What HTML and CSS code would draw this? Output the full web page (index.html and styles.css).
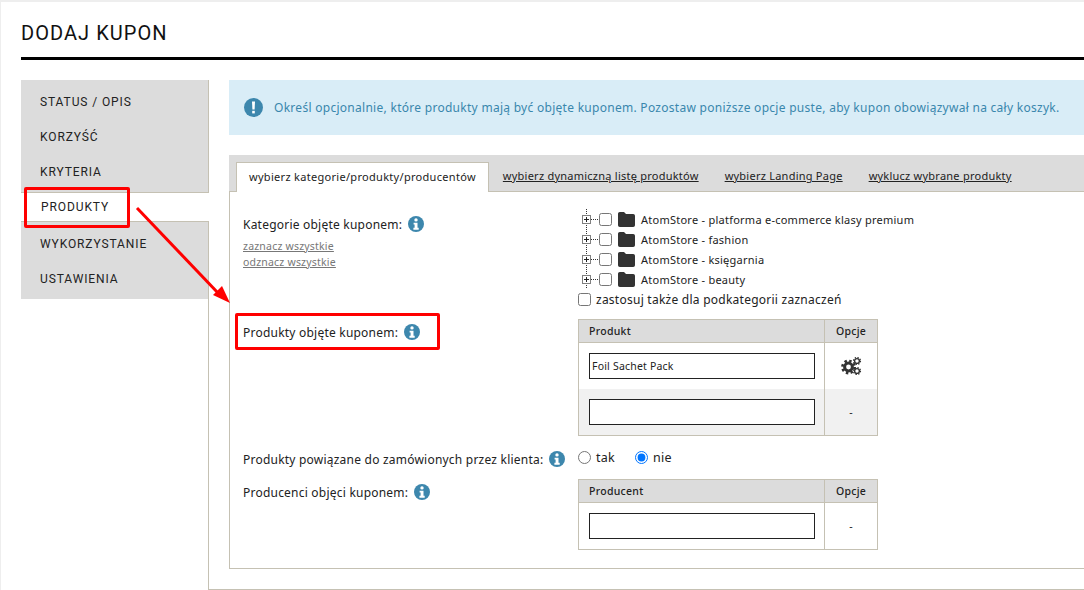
FILE: index.html
```html
<!DOCTYPE html>
<html lang="pl">
<head>
<meta charset="utf-8">
<title>Dodaj kupon</title>
<link rel="stylesheet" href="styles.css">
</head>
<body>
<svg class="defs" width="0" height="0">
  <symbol id="info" viewBox="0 0 16 16">
    <circle cx="8" cy="8" r="8" fill="#3d87ad"/>
    <circle cx="8" cy="3.900" r="1.700" fill="#fff"/>
    <path d="M5.600 6.700h3.900v5h1.200v2H5.400v-2h1.200V8.600H5.600z" fill="#fff"/>
  </symbol>
  <symbol id="toggle" viewBox="0 0 17 20">
    <path d="M4.500 0V20M9 10.500H16" stroke="#333" stroke-dasharray="1 1" fill="none"/>
    <rect x="0.500" y="6.500" width="8" height="8" fill="#fff" stroke="#808080"/>
    <path d="M2 10.500H7M4.500 8V13" stroke="#222" fill="none"/>
  </symbol>
  <symbol id="folder" viewBox="0 0 17 15">
    <path d="M0 2C0 .8.700 0 1.800 0H6L8 2H15.200C16.300 2 17 2.800 17 4V13C17 14.200 16.300 15 15.200 15H1.800C.7 15 0 14.200 0 13z" fill="#333"/>
  </symbol>
</svg>

<div class="page">
  <h1 class="title">DODAJ KUPON</h1>
  <div class="layout">
    <ul class="menu">
      <li>STATUS / OPIS</li>
      <li>KORZYŚĆ</li>
      <li>KRYTERIA</li>
      <li class="active">PRODUKTY</li>
      <li>WYKORZYSTANIE</li>
      <li>USTAWIENIA</li>
    </ul>
    <div class="main">
      <div class="alert">
        <svg class="alert-icon" viewBox="0 0 19 19">
          <circle cx="9.500" cy="9.500" r="9.500" fill="#3d87ad"/>
          <path d="M8 3.500h3l-.4 8H8.400z" fill="#fff"/>
          <rect x="8.200" y="12.800" width="2.600" height="2.600" fill="#fff"/>
        </svg>
        <span>Określ opcjonalnie, które produkty mają być objęte kuponem. Pozostaw poniższe opcje puste, aby kupon obowiązywał na cały koszyk.</span>
      </div>
      <div class="tabs">
        <a class="tab current">wybierz kategorie/produkty/producentów</a>
        <a class="tab">wybierz dynamiczną listę produktów</a>
        <a class="tab">wybierz Landing Page</a>
        <a class="tab">wyklucz wybrane produkty</a>
      </div>
      <div class="panel">
        <div class="row row-tree">
          <div class="label">
            <div class="label-line">Kategorie objęte kuponem: <svg class="info"><use href="#info"/></svg></div>
            <a class="small-link first">zaznacz wszystkie</a>
            <a class="small-link">odznacz wszystkie</a>
          </div>
          <div class="field">
            <ul class="tree">
              <li><svg class="toggle"><use href="#toggle"/></svg><input type="checkbox"><svg class="folder"><use href="#folder"/></svg>AtomStore - platforma e-commerce klasy premium</li>
              <li><svg class="toggle"><use href="#toggle"/></svg><input type="checkbox"><svg class="folder"><use href="#folder"/></svg>AtomStore - fashion</li>
              <li><svg class="toggle"><use href="#toggle"/></svg><input type="checkbox"><svg class="folder"><use href="#folder"/></svg>AtomStore - księgarnia</li>
              <li><svg class="toggle"><use href="#toggle"/></svg><input type="checkbox"><svg class="folder"><use href="#folder"/></svg>AtomStore - beauty</li>
            </ul>
            <label class="apply"><input type="checkbox">zastosuj także dla podkategorii zaznaczeń</label>
          </div>
        </div>

        <div class="row row-products">
          <div class="label"><div class="label-line">Produkty objęte kuponem: <svg class="info"><use href="#info"/></svg></div></div>
          <table class="grid">
            <tr><th class="col-main">Produkt</th><th class="col-opt">Opcje</th></tr>
            <tr>
              <td class="col-main"><input class="text" type="text" value="Foil Sachet Pack"></td>
              <td class="col-opt">
                <svg class="gears" viewBox="0 0 21 18">
                  <circle cx="7.500" cy="10" r="6.100" fill="none" stroke="#333" stroke-width="2.600" stroke-dasharray="2.400 2.390"/>
                  <circle cx="7.500" cy="10" r="3.900" fill="none" stroke="#333" stroke-width="3"/>
                  <circle cx="16" cy="4" r="2.400" fill="none" stroke="#333" stroke-width="1.400"/>
                  <circle cx="16" cy="4" r="3.500" fill="none" stroke="#333" stroke-width="1.200" stroke-dasharray="1.400 1.350"/>
                  <circle cx="16" cy="14" r="2.400" fill="none" stroke="#333" stroke-width="1.400"/>
                  <circle cx="16" cy="14" r="3.500" fill="none" stroke="#333" stroke-width="1.200" stroke-dasharray="1.400 1.350"/>
                </svg>
              </td>
            </tr>
            <tr class="alt">
              <td class="col-main"><input class="text" type="text"></td>
              <td class="col-opt">-</td>
            </tr>
          </table>
        </div>

        <div class="row row-radio">
          <div class="label"><div class="label-line">Produkty powiązane do zamówionych przez klienta: <svg class="info"><use href="#info"/></svg></div></div>
          <div class="radios">
            <label><input type="radio" name="linked">tak</label>
            <label><input type="radio" name="linked" checked>nie</label>
          </div>
        </div>

        <div class="row row-makers">
          <div class="label"><div class="label-line">Producenci objęci kuponem: <svg class="info"><use href="#info"/></svg></div></div>
          <table class="grid">
            <tr><th class="col-main">Producent</th><th class="col-opt">Opcje</th></tr>
            <tr class="last">
              <td class="col-main"><input class="text" type="text"></td>
              <td class="col-opt">-</td>
            </tr>
          </table>
        </div>
      </div>
    </div>
  </div>
</div>

<!-- red annotations drawn over the screenshot -->
<div class="mark mark-menu"></div>
<div class="mark mark-label"></div>
<svg class="arrow" viewBox="0 0 110 120">
  <path d="M2 1L84 87" stroke="#f00" stroke-width="3" fill="none"/>
  <path d="M95 96L78 88L87 79z" fill="#f00"/>
</svg>
</body>
</html>
```

FILE: styles.css
```css
* {
    box-sizing: border-box;
}
html, body {
    margin: 0;
    height: 590px;
    overflow: hidden;
}
body {
    position: relative;
    background: #eee;
    padding: 2px 0 0 1px;
    font-family: "Noto Sans", sans-serif;
    font-size: 12px;
    letter-spacing: 0.28px;
    color: #222;
}
ul {
    list-style: none;
    margin: 0;
    padding: 0;
}
.defs {
    position: absolute;
}
.page {
    background: #fff;
    height: 588px;
    padding: 0 0 0 20px;
}

/* header */
.title {
    margin: 0;
    height: 58px;
    border-bottom: 3px solid #000;
    padding-top: 19px;
    font-family: Roboto, sans-serif;
    font-size: 20px;
    line-height: 24px;
    font-weight: 400;
    letter-spacing: 1.05px;
    color: #111;
}
.layout {
    display: flex;
    height: 530px;
    padding-top: 20px;
    border-bottom: 1px solid #c5c1b3;
    margin-left: 187px;
}

/* left menu */
.menu {
    width: 188px;
    flex: none;
    margin-left: -187px;
    font-family: Roboto, sans-serif;
    letter-spacing: 0.9px;
    font-size: 12px;
}
.menu li {
    height: 35px;
    line-height: 45px;
    padding-left: 19px;
    background: #dcdcdc;
    border-right: 1px solid #c5c1b3;
}
.menu li:nth-child(3) {
    height: 43px;
    border-bottom: 1px solid #c5c1b3;
}
.menu .active {
    height: 28px;
    line-height: 28px;
    padding-left: 20px;
    background: #fff;
    border-right: 0;
    margin-right: 1px;
}
.menu li:nth-child(5) {
    height: 43px;
    border-top: 1px solid #c5c1b3;
    line-height: 45px;
}
.menu li:nth-child(6) {
    line-height: 31px;
}

/* right side */
.main {
    flex: 1;
    margin-left: 20px;
    position: relative;
    min-width: 0;
}
.main::before {
    content: "";
    position: absolute;
    left: -21px;
    top: 141px;
    bottom: 0;
    border-left: 1px solid #c5c1b3;
}
.alert {
    height: 55px;
    background: #d9edf7;
    color: #3a87ad;
    display: flex;
    align-items: center;
    padding-left: 15px;
    white-space: nowrap;
}
.alert-icon {
    width: 19px;
    height: 19px;
    margin-right: 11px;
    flex: none;
}
.tabs {
    margin-top: 20px;
    height: 37px;
    background: #dcdcdc;
    border-bottom: 1px solid #c5c1b3;
    display: flex;
    padding: 7px 0 0 7px;
    font-size: 11px;
    letter-spacing: 0.24px;
}
.tab {
    color: #222;
    text-decoration: underline;
    line-height: 28px;
    padding: 0 13px;
    white-space: nowrap;
}
.tab.current {
    height: 30px;
    background: #fff;
    border: 1px solid #c5c1b3;
    border-bottom: 0;
    padding: 0 12px;
    margin-right: 1px;
    letter-spacing: 0.3px;
    text-decoration: none;
}
.panel {
    height: 377px;
    border-left: 1px solid #c5c1b3;
    border-bottom: 1px solid #c5c1b3;
    padding-left: 13px;
}
.row {
    display: flex;
}
.label {
    width: 335px;
    flex: none;
}
.label-line {
    display: flex;
    align-items: center;
    height: 20px;
    gap: 6px;
    letter-spacing: 0.22px;
    white-space: nowrap;
}
.info {
    width: 16px;
    height: 16px;
    flex: none;
}
.small-link {
    display: block;
    color: #777;
    font-size: 10.500px;
    letter-spacing: 0.2px;
    line-height: 16px;
    text-decoration: underline;
}
.small-link.first {
    margin-top: 4px;
}

/* category tree */
.row-tree {
    padding-top: 22px;
    height: 127px;
}
.field {
    margin-top: -5px;
}
.tree li {
    display: flex;
    align-items: center;
    height: 20px;
    padding-left: 4px;
    font-size: 11px;
    letter-spacing: 0.25px;
    white-space: nowrap;
}
.toggle {
    width: 17px;
    height: 20px;
    flex: none;
}
.tree input {
    margin: 0 6px 0 0;
}
.folder {
    width: 17px;
    height: 15px;
    margin-right: 6px;
    flex: none;
}
.apply {
    display: flex;
    align-items: center;
    height: 20px;
    letter-spacing: 0.25px;
}
.apply input {
    margin: 0 5px 0 0;
}

/* tables */
.grid {
    width: 300px;
    border-collapse: collapse;
    border: 1px solid #c5c1b3;
    table-layout: fixed;
}
.grid th {
    height: 23px;
    padding: 0;
    background: #dcdcdc;
    border: 1px solid #c5c1b3;
    font-size: 10.500px;
    font-weight: 500;
}
.grid td {
    height: 46px;
    padding: 0;
    border-right: 1px solid #c5c1b3;
    font-size: 10.500px;
    text-align: center;
}
.grid .alt td, .grid .last td {
    height: 47px;
}
.grid .col-main {
    width: 246px;
    padding-left: 10px;
    text-align: left;
}
.grid .col-opt {
    text-align: center;
}
.alt td {
    background: #f1f1f1;
}
.text {
    display: block;
    width: 226px;
    height: 26px;
    border: 1px solid #222;
    border-radius: 0;
    background: #fff;
    padding: 0 2px;
    font-family: "Noto Sans", sans-serif;
    font-size: 10.500px;
    letter-spacing: 0.2px;
    color: #222;
    outline: 0;
}
.gears {
    display: block;
    width: 21px;
    height: 18px;
    margin: 0 auto;
}
.row-products .label {
    padding-top: 3px;
}
.row-radio {
    height: 43px;
    padding-top: 12px;
}
.row-radio .label {
    padding-top: 1px;
}
.radios {
    display: flex;
    gap: 20px;
    height: 18px;
    align-items: center;
    font-size: 12.500px;
}
.radios label {
    display: flex;
    align-items: center;
}
.radios input {
    margin: 0 5px 0 0;
}
.row-makers .label {
    padding-top: 3px;
}

/* annotations */
.mark {
    position: absolute;
    border: 3px solid #f00;
    border-radius: 2px;
}
.mark-menu {
    left: 24px;
    top: 187px;
    width: 106px;
    height: 41px;
}
.mark-label {
    left: 235px;
    top: 313px;
    width: 205px;
    height: 37px;
}
.arrow {
    position: absolute;
    left: 135px;
    top: 207px;
    width: 110px;
    height: 120px;
    overflow: visible;
}
```
